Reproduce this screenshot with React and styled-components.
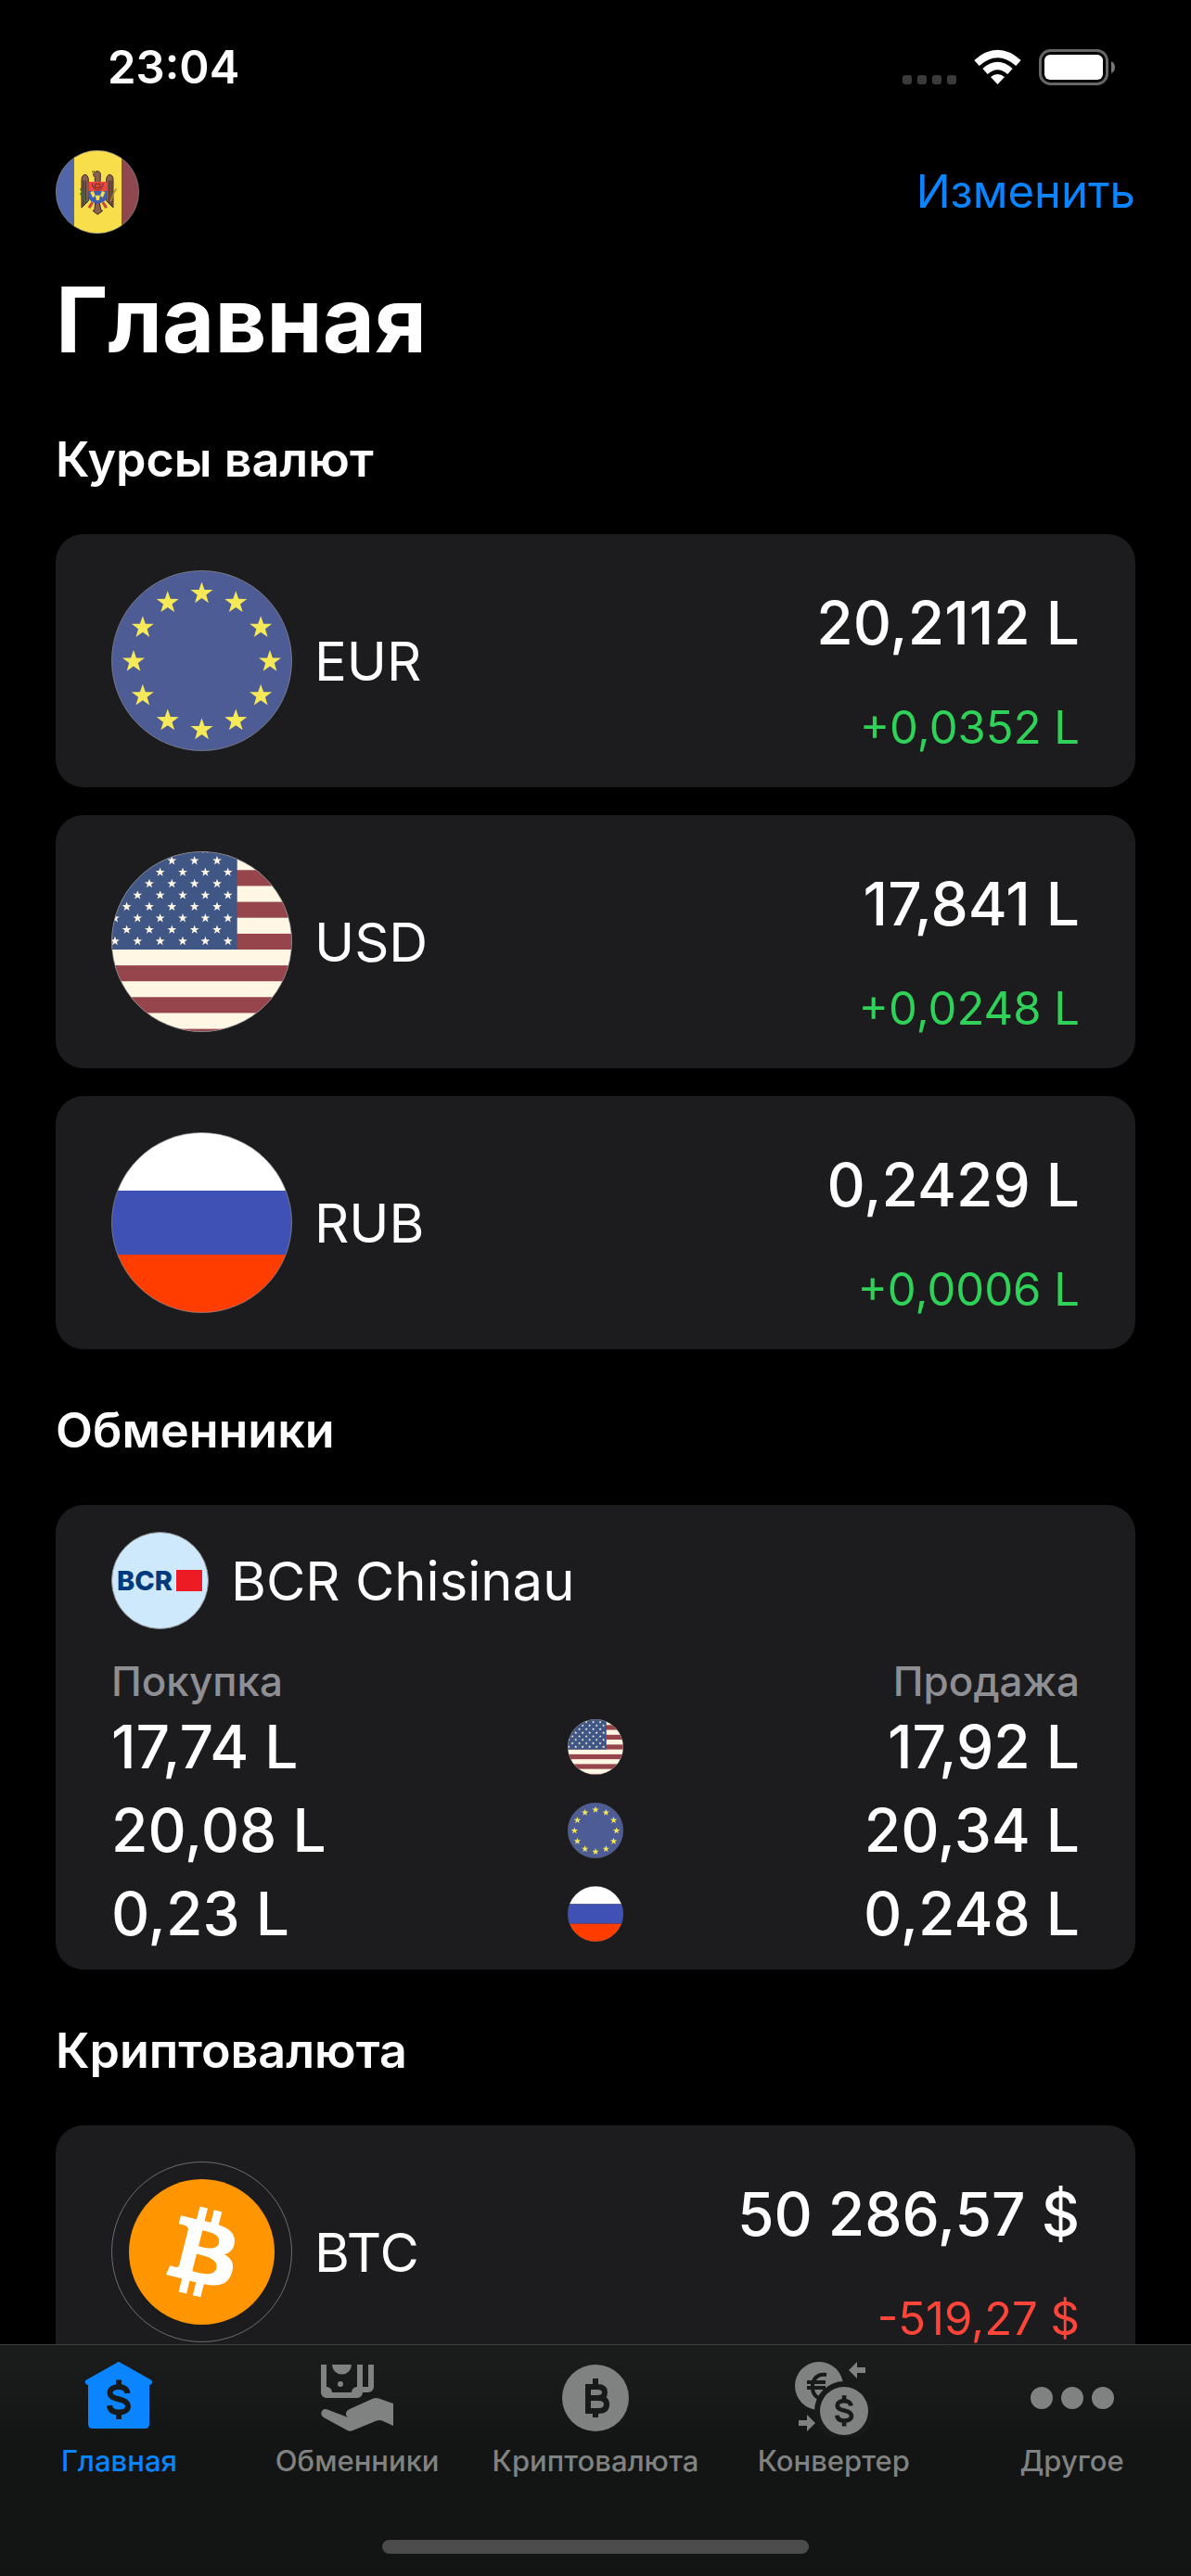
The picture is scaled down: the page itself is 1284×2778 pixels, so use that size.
import { useState } from 'react';
import styled, { createGlobalStyle } from 'styled-components';

const GlobalStyle = createGlobalStyle`
* {
  box-sizing: border-box;
}
body {
  margin: 0;
  background: #000;
  color: #fff;
  font-family: Inter, "Liberation Sans", sans-serif;
}
h1, h2, p {
  margin: 0;
}
button {
  font-family: inherit;
  background: none;
  border: 0;
  padding: 0;
  cursor: pointer;
}
`;

const Screen = styled.div`
  display: flex;
  flex-direction: column;
  height: 100vh;
`;

const Content = styled.main`
  flex: 1;
  min-height: 0;
  overflow-y: auto;
  scrollbar-width: none;
  padding: 0 60px 30px;
`;

const StatusBar = styled.div`
  display: flex;
  align-items: center;
  justify-content: space-between;
  padding: 43px 22px 59px 56px;
`;

const Clock = styled.time`
  font-size: 49px;
  font-weight: 600;
  line-height: 60px;
`;

const StatusIcons = styled.svg`
  display: block;
  width: 230px;
  height: 40px;
`;

const NavBar = styled.header`
  display: flex;
  align-items: center;
  justify-content: space-between;
  margin-bottom: 30px;
`;

const EditButton = styled.button`
  color: #0a84ff;
  font-size: 49px;
  line-height: 60px;
`;

const Title = styled.h1`
  font-size: 97px;
  font-weight: 700;
  line-height: 126px;
`;

const Section = styled.section`
  padding-top: 58px;
`;

const SectionTitle = styled.h2`
  margin-bottom: 50px;
  font-size: 52px;
  font-weight: 600;
  line-height: 60px;
`;

const CardList = styled.div`
  display: flex;
  flex-direction: column;
  gap: 30px;
`;

const Card = styled.article`
  background: #1c1c1e;
  border-radius: 30px;
`;

const RateCard = styled(Card)`
  display: flex;
  align-items: center;
  gap: 24px;
  padding: 34px 60px;
`;

const BankCard = styled(Card)`
  padding: 29px 60px 15px;
`;

const BankHead = styled.div`
  display: flex;
  align-items: center;
  gap: 24px;
  margin-bottom: 30px;
`;

const Name = styled.p`
  font-size: 58px;
  line-height: 72px;
`;

const Amounts = styled.div`
  display: flex;
  flex-direction: column;
  align-items: flex-end;
  gap: 47px;
  margin-left: auto;
  padding: 22px 0 4px;
`;

const Price = styled.p`
  font-size: 64px;
  font-weight: 500;
  line-height: 80px;
`;

const Change = styled.p`
  color: ${({ $down }) => ($down ? '#ff453a' : '#30d158')};
  font-size: 49px;
  line-height: 52px;
`;

const Icon = styled.svg`
  display: block;
  flex: none;
  width: ${({ $size }) => $size}px;
  height: ${({ $size }) => $size}px;
`;

const ExchangeTable = styled.table`
  width: 100%;
  table-layout: fixed;
  border-collapse: collapse;
`;

const HeadCell = styled.th`
  padding: 0;
  color: #8e8e93;
  font-size: 44px;
  font-weight: 500;
  line-height: 52px;
  text-align: ${({ $align }) => $align || 'left'};
`;

const RateCell = styled.td`
  height: 90px;
  padding: 0;
  font-size: 64px;
  font-weight: 500;
  line-height: 80px;
  text-align: ${({ $align }) => $align || 'left'};

  svg {
    margin: 0 auto;
  }
`;

const TabBar = styled.footer`
  flex: none;
  display: flex;
  flex-direction: column;
  align-items: center;
  padding-bottom: 24px;
  border-top: 1px solid #3d3d3f;
  background: linear-gradient(#1b1d1c, #131514 45%, #121413);
`;

const Tabs = styled.nav`
  display: grid;
  grid-template-columns: repeat(5, minmax(0, 1fr));
  width: 100%;
  padding-top: 9px;
  margin-bottom: 67px;
`;

const Tab = styled.button`
  display: flex;
  flex-direction: column;
  align-items: center;
  gap: 8px;
  color: ${({ $active }) => ($active ? '#0a84ff' : '#808281')};
  font-size: 31px;
  font-weight: 500;
  line-height: 36px;
`;

const HomeIndicator = styled.div`
  width: 460px;
  height: 15px;
  border-radius: 8px;
  background: #4b4b4b;
`;

const starPoints = (cx, cy, r) =>
  Array.from({ length: 10 }, (_, i) => {
    const radius = i % 2 ? r * 0.4 : r;
    const angle = (Math.PI / 5) * i - Math.PI / 2;
    return `${(cx + radius * Math.cos(angle)).toFixed(2)},${(cy + radius * Math.sin(angle)).toFixed(2)}`;
  }).join(' ');

const Rim = () => <circle cx="97.5" cy="97.5" r="97" fill="none" stroke="#8e8e93" strokeOpacity="0.7" />;

const EurFlag = ({ size }) => (
  <Icon $size={size} viewBox="0 0 195 195" role="img" aria-label="EUR">
    <circle cx="97.5" cy="97.5" r="97" fill="#4d5c95" />
    {Array.from({ length: 12 }, (_, i) => {
      const angle = (Math.PI / 6) * i;
      return (
        <polygon
          key={i}
          fill="#f6e957"
          points={starPoints(97.5 + 73.5 * Math.cos(angle), 98.5 + 73.5 * Math.sin(angle), 12.6)}
        />
      );
    })}
    <Rim />
  </Icon>
);

const UsdFlag = ({ size }) => {
  const stars = [];
  for (let row = 0; row < 9; row += 1) {
    for (let col = 0; col < 6; col += 1) {
      stars.push([(row % 2 ? 114 : 125.7) - col * 24.35, 96.5 - row * 12.4]);
    }
  }
  return (
    <Icon $size={size} viewBox="0 0 195 195" role="img" aria-label="USD">
      <clipPath id={`usd-${size}`}>
        <circle cx="97.5" cy="97.5" r="97" />
      </clipPath>
      <g clipPath={`url(#usd-${size})`}>
        <rect width="195" height="195" fill="#fff6e3" />
        {[-14, 20.3, 54.6, 88.9, 123.1, 157.3, 191.6].map((y) => (
          <rect key={y} y={y} width="195" height="17.1" fill="#96454d" />
        ))}
        <rect width="135.7" height="106" fill="#405785" />
        {stars.map(([x, y]) => (
          <polygon key={`${x}-${y}`} fill="#fff6e3" points={starPoints(x, y + 0.5, 5.2)} />
        ))}
      </g>
      <Rim />
    </Icon>
  );
};

const RubFlag = ({ size }) => (
  <Icon $size={size} viewBox="0 0 195 195" role="img" aria-label="RUB">
    <clipPath id={`rub-${size}`}>
      <circle cx="97.5" cy="97.5" r="97" />
    </clipPath>
    <g clipPath={`url(#rub-${size})`}>
      <rect width="195" height="63" fill="#fff" />
      <rect y="63" width="195" height="69" fill="#3f51b5" />
      <rect y="132" width="195" height="63" fill="#ff3d00" />
    </g>
    <Rim />
  </Icon>
);

const BtcLogo = ({ size }) => (
  <Icon $size={size} viewBox="0 0 195 195" role="img" aria-label="BTC">
    <Rim />
    <circle cx="97.5" cy="97.5" r="78.5" fill="#ff9500" />
    <path
      transform="translate(19 19) scale(4.906)"
      fill="#fff"
      d="M23.189 14.02c.314-2.096-1.283-3.223-3.465-3.975l.708-2.84-1.728-.43-.69 2.765c-.454-.114-.92-.22-1.385-.326l.695-2.783L15.596 6l-.708 2.839c-.376-.086-.746-.17-1.104-.26l.002-.009-2.384-.595-.46 1.846s1.283.294 1.256.312c.7.175.826.638.805 1.006l-.806 3.235c.048.012.11.03.18.057l-.183-.045-1.13 4.532c-.086.212-.303.531-.793.41.018.025-1.256-.313-1.256-.313l-.858 1.978 2.25.561c.418.105.828.215 1.231.318l-.715 2.872 1.727.43.708-2.84c.472.127.93.245 1.378.357l-.706 2.828 1.728.43.715-2.866c2.948.558 5.164.333 6.097-2.333.752-2.146-.037-3.385-1.588-4.192 1.13-.26 1.98-1.003 2.207-2.538zm-3.95 5.538c-.533 2.147-4.148.986-5.32.695l.95-3.805c1.172.293 4.929.872 4.37 3.11zm.535-5.569c-.487 1.953-3.495.96-4.47.717l.86-3.45c.975.243 4.118.696 3.61 2.733z"
    />
  </Icon>
);

const MoldovaFlag = () => (
  <Icon $size={90} viewBox="30 36 270 270" role="img" aria-label="Молдова">
    <clipPath id="moldova">
      <circle cx="165" cy="171" r="134" />
    </clipPath>
    <g clipPath="url(#moldova)">
      <rect x="30" y="36" width="60" height="270" fill="#5166a8" />
      <rect x="90" y="36" width="153" height="270" fill="#f8de4b" />
      <rect x="243" y="36" width="57" height="270" fill="#8f484d" />
    </g>
    <g stroke="#3b2a22" strokeWidth="3" fill="#8b6050">
      <path d="M114 222V130q1-14 11-15 9 1 11 15v70zM216 222V130q-1-14-11-15-9 1-11 15v70z" />
      <path d="M120 134v82M127 134v74M210 134v82M203 134v74" fill="none" />
      <path d="M157 140v-16l-6-9 8-10q14-4 16 8l-1 27z" />
      <path d="M158 206h14l4 22 6 4-16 12-16-12 6-4z" />
    </g>
    <path d="M148 103l6 6m0-8v10m-7-4h13" stroke="#6f7a3c" strokeWidth="3" fill="none" />
    <path d="M110 160l8 10-6 8 12 8-4 10 14 8" stroke="#3c6a3f" strokeWidth="6" fill="none" />
    <path d="M226 160l-10 18-8 24" stroke="#a88a2c" strokeWidth="4" fill="none" />
    <path d="M136 138h60v30h-60z" fill="#e8463f" />
    <path d="M136 168h60v22q-4 14-30 20-26-6-30-20z" fill="#3e5fae" />
    <path d="M148 143q4 22 18 22t18-22M158 145h16v12h-16z" stroke="#6b2a20" strokeWidth="3" fill="none" />
    <path d="M142 172l10-4 6 14-8 8zM190 172l-10-4-6 14 8 8zM158 182h16l-4 16h-8z" fill="#f8de4b" />
    <path d="M134 220l12-18 7 5-11 18zM198 220l-12-18-7 5 11 18z" fill="#c8463f" />
    <circle cx="165" cy="171" r="134" fill="none" stroke="#8e8e93" strokeWidth="2" />
  </Icon>
);

const BcrLogo = () => (
  <Icon $size={105} viewBox="0 0 105 105" role="img" aria-label="BCR">
    <circle cx="52.5" cy="52.5" r="52" fill="#cde9fb" stroke="#8e8e93" />
    <text x="6" y="63" fill="#003a7d" fontFamily="Inter" fontWeight="800" fontSize="29">BCR</text>
    <rect x="70" y="41" width="28" height="23" fill="#ed1c24" />
  </Icon>
);

const HomeIcon = () => (
  <Icon $size={90} viewBox="0 0 90 90" aria-hidden="true">
    <path
      fill="currentColor"
      d="M43 10q2-2 4 0l32 18q3 2 2 4-1 2-3 2v42q0 5-5 5H17q-5 0-5-5V34q-2 0-3-2-1-3 2-4z"
    />
    <path
      d="M54.500 43C54 38.500 50 36 45 36C39 36 35.500 39 35.500 42.500C35.500 46.500 39 48 45 49.300C51 50.600 55 52.500 55 57C55 61 51 63.500 45 63.500C39 63.500 35.500 61 35 56M45 28.500V36M45 63V71"
      fill="none"
      stroke="#181a19"
      strokeWidth="6"
    />
  </Icon>
);

const HandIcon = () => (
  <Icon $size={90} viewBox="0 0 30 30" aria-hidden="true" fill="currentColor">
    <path d="M2 4h2v8a2 2 0 0 1 2 2h7a2 2 0 0 1 2-2V4h2v8h2V4h2v8a2 2 0 0 1-2 2h-2a2 2 0 0 1-2 2H4a2 2 0 0 1-2-2z" />
    <path d="M6 4h7a3.5 3.5 0 0 1-7 0z" />
    <circle cx="9" cy="11" r="1" />
    <path d="M28 18l-5.200-1.800q-1-.4-2 0l-8.300 3.700q-1.700.8-1.500 2 .1.900 1 1.200l-7.900-3Q2.700 19.700 2.200 21q-.4 1.200.8 2l8.500 4.700q1 .5 2 0L22 24.200q1-.4 2 0l4 1.800z" />
  </Icon>
);

const CryptoIcon = () => (
  <Icon $size={90} viewBox="0 0 90 90" aria-hidden="true">
    <circle cx="45" cy="48" r="36" fill="currentColor" />
    <path
      d="M37 36h10q8 0 8 6 0 6-8 6H37h11q9 0 9 7t-9 7H37zM45 27v8M45 62v7"
      fill="none"
      stroke="#181a19"
      strokeWidth="6"
    />
  </Icon>
);

const ConverterIcon = () => (
  <Icon $size={90} viewBox="0 0 90 90" aria-hidden="true">
    <circle cx="29" cy="35" r="26" fill="currentColor" />
    <path
      d="M37 23q-13-2-15 11-1 14 12 15M16 31h20M16 37h20"
      fill="none"
      stroke="#181a19"
      strokeWidth="4"
    />
    <circle cx="56" cy="62" r="32" fill="#181a19" />
    <circle cx="56" cy="62" r="26" fill="currentColor" />
    <path
      transform="translate(21 23) scale(0.78)"
      d="M54.500 43C54 38.500 50 36 45 36C39 36 35.500 39 35.500 42.500C35.500 46.500 39 48 45 49.300C51 50.600 55 52.500 55 57C55 61 51 63.500 45 63.500C39 63.500 35.500 61 35 56M45 28.500V36M45 63V71"
      fill="none"
      stroke="#181a19"
      strokeWidth="6"
    />
    <path d="M61 18l9-9v6h9v6h-9v6zM25 75l-9-9v6H7v6h9v6z" fill="currentColor" />
  </Icon>
);

const MoreIcon = () => (
  <Icon $size={90} viewBox="0 0 90 90" aria-hidden="true" fill="currentColor">
    <circle cx="12" cy="48" r="12" />
    <circle cx="45" cy="48" r="12" />
    <circle cx="78" cy="48" r="12" />
  </Icon>
);

const currencies = [
  { code: 'EUR', Flag: EurFlag, price: '20,2112 L', change: '+0,0352 L' },
  { code: 'USD', Flag: UsdFlag, price: '17,841 L', change: '+0,0248 L' },
  { code: 'RUB', Flag: RubFlag, price: '0,2429 L', change: '+0,0006 L' },
];

const crypto = [
  { code: 'BTC', Flag: BtcLogo, price: '50 286,57 $', change: '-519,27 $', down: true },
];

const bankRates = [
  { code: 'USD', Flag: UsdFlag, buy: '17,74 L', sell: '17,92 L' },
  { code: 'EUR', Flag: EurFlag, buy: '20,08 L', sell: '20,34 L' },
  { code: 'RUB', Flag: RubFlag, buy: '0,23 L', sell: '0,248 L' },
];

const tabs = [
  { label: 'Главная', TabIcon: HomeIcon },
  { label: 'Обменники', TabIcon: HandIcon },
  { label: 'Криптовалюта', TabIcon: CryptoIcon },
  { label: 'Конвертер', TabIcon: ConverterIcon },
  { label: 'Другое', TabIcon: MoreIcon },
];

const Rates = ({ items }) => (
  <CardList>
    {items.map(({ code, Flag, price, change, down }) => (
      <RateCard key={code}>
        <Flag size={195} />
        <Name>{code}</Name>
        <Amounts>
          <Price>{price}</Price>
          <Change $down={down}>{change}</Change>
        </Amounts>
      </RateCard>
    ))}
  </CardList>
);

const App = () => {
  const [active, setActive] = useState('Главная');

  return (
    <Screen>
      <GlobalStyle />
      <Content>
        <StatusBar>
          <Clock>23:04</Clock>
          <StatusIcons viewBox="0 0 230 40" aria-hidden="true">
            <g fill="#3a3a3a">
              <rect x="1" y="28" width="10" height="10" rx="3" />
              <rect x="17" y="28" width="10" height="10" rx="3" />
              <rect x="33" y="28" width="10" height="10" rx="3" />
              <rect x="49" y="28" width="10" height="10" rx="3" />
            </g>
            <g fill="none" stroke="#fff" strokeWidth="8">
              <path d="M81 15Q103.500-5 126 15" />
              <path d="M90 24Q103.500 12 117 24" />
            </g>
            <path d="M96 30q7.500-6 15 0l-7.500 8z" fill="#fff" />
            <rect x="149.500" y="1.500" width="72" height="36" rx="11" fill="none" stroke="#666" strokeWidth="3" />
            <rect x="154" y="6" width="63" height="27" rx="6" fill="#fff" />
            <path d="M226 13q4 2 4 6.500t-4 6.500z" fill="#777" />
          </StatusIcons>
        </StatusBar>
        <NavBar>
          <MoldovaFlag />
          <EditButton>Изменить</EditButton>
        </NavBar>
        <Title>Главная</Title>

        <Section>
          <SectionTitle>Курсы валют</SectionTitle>
          <Rates items={currencies} />
        </Section>

        <Section>
          <SectionTitle>Обменники</SectionTitle>
          <BankCard>
            <BankHead>
              <BcrLogo />
              <Name>BCR Chisinau</Name>
            </BankHead>
            <ExchangeTable>
              <thead>
                <tr>
                  <HeadCell scope="col">Покупка</HeadCell>
                  <HeadCell scope="col" aria-label="Валюта" />
                  <HeadCell scope="col" $align="right">Продажа</HeadCell>
                </tr>
              </thead>
              <tbody>
                {bankRates.map(({ code, Flag, buy, sell }) => (
                  <tr key={code}>
                    <RateCell>{buy}</RateCell>
                    <RateCell $align="center"><Flag size={60} /></RateCell>
                    <RateCell $align="right">{sell}</RateCell>
                  </tr>
                ))}
              </tbody>
            </ExchangeTable>
          </BankCard>
        </Section>

        <Section>
          <SectionTitle>Криптовалюта</SectionTitle>
          <Rates items={crypto} />
        </Section>
      </Content>

      <TabBar>
        <Tabs>
          {tabs.map(({ label, TabIcon }) => (
            <Tab key={label} $active={label === active} onClick={() => setActive(label)}>
              <TabIcon />
              {label}
            </Tab>
          ))}
        </Tabs>
        <HomeIndicator />
      </TabBar>
    </Screen>
  );
};

export default App;
